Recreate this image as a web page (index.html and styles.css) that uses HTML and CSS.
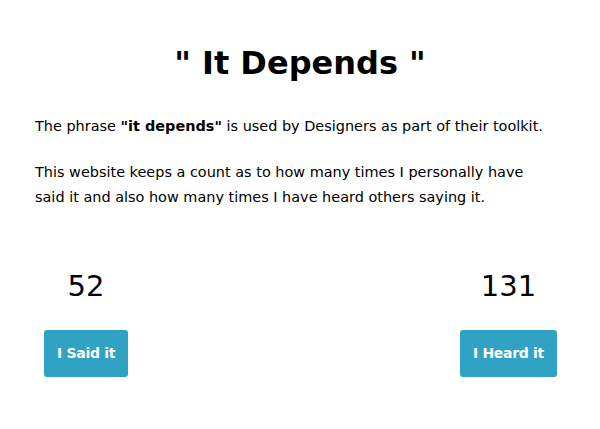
FILE: index.html
```html
<!DOCTYPE html>
<html lang="en">
<head>
<meta charset="utf-8">
<title>It Depends</title>
<link rel="stylesheet" href="styles.css">
</head>
<body>
<main class="page">
  <h1 class="title">" It Depends "</h1>
  <p class="intro">The phrase <strong>"it depends"</strong> is used by Designers as part of their toolkit.</p>
  <p class="intro">This website keeps a count as to how many times I personally have said it and also how many times I have heard others saying it.</p>
  <section class="counters">
    <div class="counter">
      <div class="count">52</div>
      <button class="btn">I Said it</button>
    </div>
    <div class="counter">
      <div class="count">131</div>
      <button class="btn">I Heard it</button>
    </div>
  </section>
</main>
</body>
</html>
```

FILE: styles.css
```css
html, body {
  margin: 0;
  padding: 0;
  background: #ffffff;
}
body {
  font-family: "DejaVu Sans", "Open Sans", sans-serif;
  color: #000000;
}
.page {
  padding: 43px 35px 0 35px;
  display: flex;
  flex-direction: column;
}
.title {
  margin: 0 0 31px 0;
  font-size: 32px;
  line-height: 40px;
  font-weight: 700;
  text-align: center;
  color: #000;
}
.intro {
  margin: 0 0 21px 0;
  font-size: 14.45px;
  line-height: 25px;
  width: 515px;
}
.intro strong {
  font-weight: 700;
}
.counters {
  display: flex;
  justify-content: space-between;
  padding: 37px 8px 0 9px;
}
.counter {
  display: flex;
  flex-direction: column;
  align-items: center;
  gap: 26px;
}
.count {
  font-size: 29px;
  line-height: 36px;
  color: #000;
}
.btn {
  font-family: inherit;
  font-size: 14px;
  line-height: 15px;
  font-weight: 700;
  letter-spacing: -0.3px;
  color: #ffffff;
  background: #30a3c4;
  border: none;
  border-radius: 3px;
  padding: 16px 13px;
}
```
